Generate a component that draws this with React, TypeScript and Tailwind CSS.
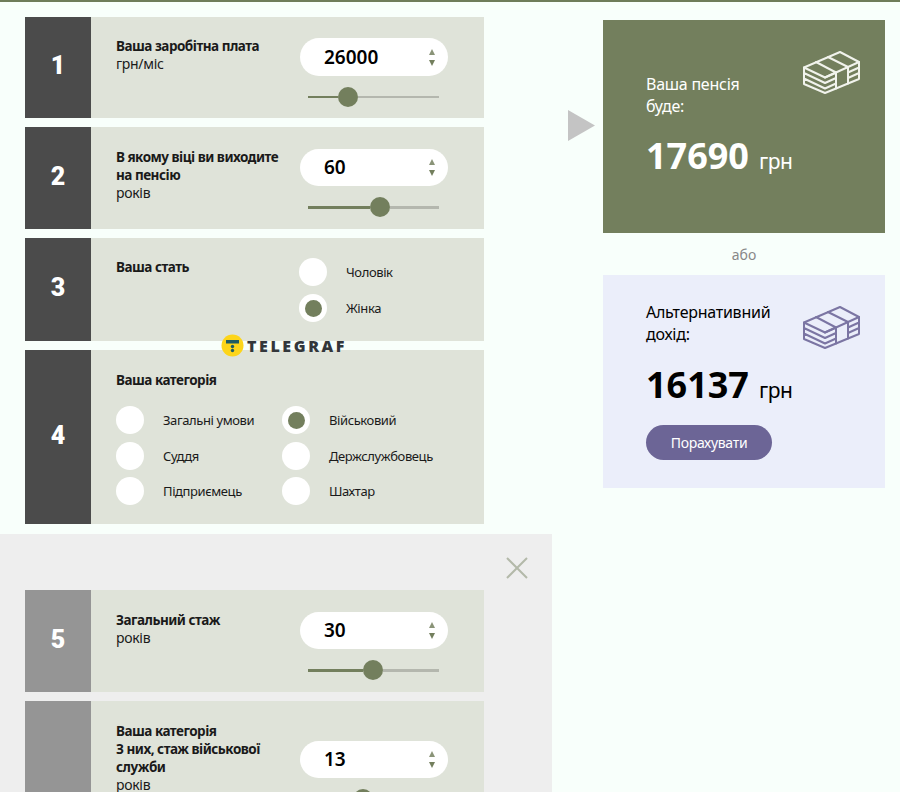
const FONT = "font-['Noto_Sans','Liberation_Sans',sans-serif]";

function MoneyIcon({ color }: { color: string }) {
  return (
    <svg width="58" height="44" viewBox="0 0 58 44" fill="none" stroke={color} strokeWidth="2" strokeLinejoin="round" strokeLinecap="round">
      <path d="M1 17.5 L37 2 L56 12 L22 27.5 Z" />
      <path d="M13 12 L33 22.5 M25 7 L45 17" />
      <path d="M1 17.5 V23 L22 33 L33 28 M1 23 V28.5 L22 38.5 L33 33.5 M1 28.5 V34 L22 43 L33 38.5" />
      <path d="M22 27.5 L33 22.5 V38.5 L45 33.5 V17" />
      <path d="M45 22.5 L56 17.5 M45 28 L56 23 M45 33.5 L56 29 M56 12 V29" />
    </svg>
  );
}

function NumberInput({ value, h = 'h-[37px]' }: { value: string; h?: string }) {
  return (
    <div className={`flex ${h} w-[148px] items-center justify-between rounded-[19px] bg-white pl-6 pr-[13px]`}>
      <span className="text-[19px] font-semibold text-black">{value}</span>
      <span className="flex flex-col items-center gap-[5px]">
        <svg width="6" height="6" viewBox="0 0 6 6" fill="#8a9478"><path d="M3 0 L6 6 H0 Z" /></svg>
        <svg width="6" height="6" viewBox="0 0 6 6" fill="#737f5d"><path d="M3 6 L6 0 H0 Z" /></svg>
      </span>
    </div>
  );
}

function Slider({ filled, track = 'h-[3px]' }: { filled: number; track?: string }) {
  return (
    <div className="ml-2 mt-[11px] flex w-[131px] items-center">
      <div className={`${track} bg-[#737f5d]`} style={{ width: filled }} />
      <div className="h-5 w-5 shrink-0 rounded-full bg-[#737f5d]" />
      <div className={`${track} flex-1 bg-[#b4b7ae]`} />
    </div>
  );
}

function NumberCell({ n, dark = true }: { n?: string; dark?: boolean }) {
  return (
    <div className={`flex w-[66px] shrink-0 items-center justify-center pb-[3px] font-['Roboto',sans-serif] text-[25px] font-black text-white ${dark ? 'bg-[#4b4b4b]' : 'bg-[#959595]'}`}>
      {n}
    </div>
  );
}

function InputRow({ n, title, unit, value, filled, height, dark, textTop = 'pt-[21px]', inputTop = 'pt-[22px]', inputH, track }: {
  n?: string;
  title: string[];
  unit: string;
  value: string;
  filled: number;
  height: string;
  dark?: boolean;
  textTop?: string;
  inputTop?: string;
  inputH?: string;
  track?: string;
}) {
  return (
    <div className={`flex ${height} bg-[#dfe3d9]`}>
      <NumberCell n={n} dark={dark} />
      <div className="flex flex-1 pl-[25px]">
        <div className={`w-[184px] pr-2 text-[13.5px] leading-[18px] text-[#1a1a1a] ${textTop}`}>
          {title.map((t) => (
            <div key={t} className="font-bold tracking-[-0.5px]">{t}</div>
          ))}
          <div className="text-[14px] tracking-[-0.3px]">{unit}</div>
        </div>
        <div className={`flex flex-col ${inputTop}`}>
          <NumberInput value={value} h={inputH} />
          <Slider filled={filled} track={track} />
        </div>
      </div>
    </div>
  );
}

function Radio({ label, selected }: { label: string; selected?: boolean }) {
  return (
    <div className="flex items-center">
      <div className="flex h-7 w-7 shrink-0 items-center justify-center rounded-full bg-white">
        {selected && <div className="h-[17px] w-[17px] rounded-full bg-[#737f5d]" />}
      </div>
      <span className="ml-[19px] mt-[2px] text-[13px] tracking-[-0.4px] text-[#1a1a1a]">{label}</span>
    </div>
  );
}

function ResultCard({ label, amount, purple }: { label: string[]; amount: string; purple?: boolean }) {
  return (
    <div className={`flex h-[213px] w-[282px] justify-between pl-[43px] pr-[24px] ${purple ? 'bg-[#ebeefa] pt-[27px] text-black' : 'bg-[#737f5d] pt-[54px] text-white'}`}>
      <div>
        <div className="text-[16px] leading-[21.5px] tracking-[-0.25px]">
          {label.map((l) => (
            <div key={l}>{l}</div>
          ))}
        </div>
        <div className={`flex items-baseline whitespace-nowrap ${purple ? 'mt-[14px]' : 'mt-[13px]'}`}>
          <span className="text-[36px] leading-[52px] font-bold">{amount}</span>
          <span className="ml-[10px] text-[21px] tracking-[-0.5px]">грн</span>
        </div>
        {purple && (
          <button className="mt-[14px] h-[35px] w-[126px] rounded-[18px] bg-[#6c6596] text-[14px] tracking-[-0.3px] text-white">
            Порахувати
          </button>
        )}
      </div>
      <div className={purple ? 'pt-[3px]' : '-mt-[24px]'}>
        <MoneyIcon color={purple ? '#7b75a3' : '#f1f3ec'} />
      </div>
    </div>
  );
}

export default function App() {
  return (
    <div className={`relative h-[792px] w-[900px] overflow-hidden border-t-2 border-[#6f7d5a] bg-[#f8fffb] ${FONT}`}>
      <div className="flex">
        <div className="w-[552px]">
          <div className="flex w-[484px] flex-col gap-[9px] pl-[25px] pt-[15px]">
            <InputRow n="1" title={['Ваша заробітна плата']} unit="грн/міс" value="26000" filled={30} height="h-[101px]" textTop="pt-[20px]" inputTop="pt-[21px]" inputH="h-[38px]" track="h-[2px]" />
            <InputRow n="2" title={['В якому віці ви виходите', 'на пенсію']} unit="років" value="60" filled={62} height="h-[102px]" />
            <div className="flex h-[103px] bg-[#dfe3d9]">
              <NumberCell n="3" />
              <div className="flex flex-1 pl-[25px] pt-[20px]">
                <div className="w-[183px] text-[13.5px] leading-[18px] font-bold tracking-[-0.5px] text-[#1a1a1a]">Ваша стать</div>
                <div className="flex flex-col gap-2">
                  <Radio label="Чоловік" />
                  <Radio label="Жінка" selected />
                </div>
              </div>
            </div>
            <div className="flex h-[174px] bg-[#dfe3d9]">
              <NumberCell n="4" />
              <div className="flex-1 pl-[25px] pt-[21px]">
                <div className="text-[13.5px] leading-[18px] font-bold tracking-[-0.5px] text-[#1a1a1a]">Ваша категорія</div>
                <div className="mt-[17px] grid grid-cols-[166px_1fr] gap-y-[7.5px]">
                  <Radio label="Загальні умови" />
                  <Radio label="Військовий" selected />
                  <Radio label="Суддя" />
                  <Radio label="Держслужбовець" />
                  <Radio label="Підприємець" />
                  <Radio label="Шахтар" />
                </div>
              </div>
            </div>
          </div>

          <div className="mt-[10px] h-[300px] bg-[#eeeeee]">
            <div className="flex h-[56px] justify-end pr-[24px] pt-[23px]">
              <svg width="22" height="22" viewBox="0 0 22 22" stroke="#b3b9a9" strokeWidth="2" fill="none">
                <path d="M1 1 L21 21 M21 1 L1 21" />
              </svg>
            </div>
            <div className="flex w-[484px] flex-col gap-[9px] pl-[25px]">
              <InputRow n="5" dark={false} title={['Загальний стаж']} unit="років" value="30" filled={55} height="h-[102px]" />
              <InputRow dark={false} title={['Ваша категорія', 'З них, стаж військової', 'служби']} unit="років" value="13" filled={45} height="h-[180px]" inputTop="pt-[40px]" />
            </div>
          </div>
        </div>

        <div className="flex pl-[16px] pt-[18px]">
          <svg className="mt-[90px] shrink-0" width="27" height="31" viewBox="0 0 27 31" fill="#c4c4c4">
            <path d="M0 0 L27 15.5 L0 31 Z" />
          </svg>
          <div className="ml-[8px] flex flex-col">
            <ResultCard label={['Ваша пенсія', 'буде:']} amount="17690" />
            <div className="flex h-[42px] items-center justify-center text-[14px] text-[#888888]">або</div>
            <ResultCard label={['Альтернативний', 'дохід:']} amount="16137" purple />
          </div>
        </div>
      </div>

      {/* watermark sits over the rows */}
      <div className="absolute left-[221px] top-[332px] flex items-center">
        <svg width="23" height="23" viewBox="0 0 23 23">
          <circle cx="11.5" cy="11.5" r="11" fill="#fdd51a" />
          <path d="M5 6 H18 V9.5 H5 Z" fill="#1f5c63" />
          <circle cx="11.5" cy="12.5" r="1.7" fill="#1f5c63" />
          <circle cx="11.5" cy="16.5" r="1.7" fill="#1f5c63" />
        </svg>
        <span className="ml-[3px] font-['Open_Sans',sans-serif] text-[16px] leading-none font-extrabold tracking-[2.6px] text-[#33373b]">TELEGRAF</span>
      </div>
    </div>
  );
}
